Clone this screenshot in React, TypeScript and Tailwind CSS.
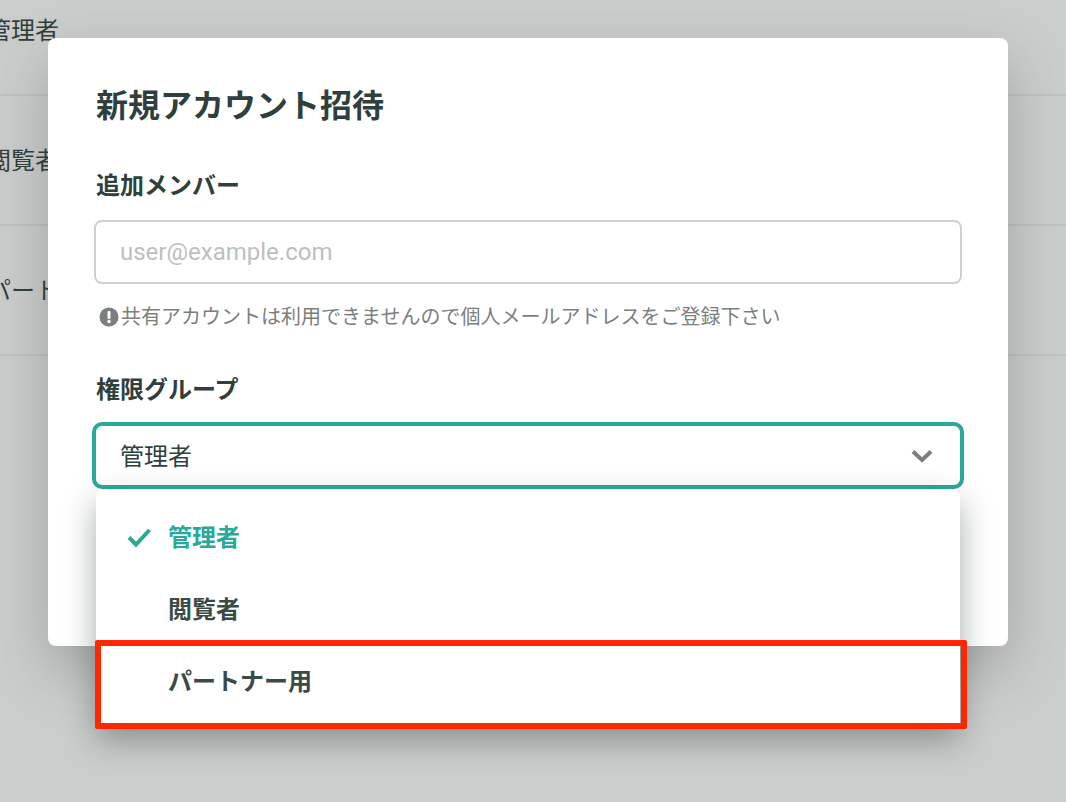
const font = "font-['Roboto','Noto_Sans_CJK_JP',sans-serif]"

function BgRow({ label }: { label: string }) {
  return (
    <div className="h-[130px] flex items-center pt-[1px] border-b-2 border-[#bfc2c1]">
      <span className="-ml-[13px] text-[24px] text-[#2f3f3c]">{label}</span>
    </div>
  )
}

function Option({ label, active }: { label: string; active?: boolean }) {
  return (
    <div className="h-[72px] flex items-center pt-[2px]">
      <div className="w-[72px] flex justify-end pr-[16px]">
        {active && (
          <svg width="26" height="22" viewBox="0 0 26 22" fill="none" className="-mt-[3px]">
            <path d="M3 11.5 L10 18.5 L23.5 4" stroke="#2aa99b" strokeWidth="4" />
          </svg>
        )}
      </div>
      <span className={active ? "text-[24px] font-bold text-[#2aa99b]" : "text-[24px] font-bold text-[#3a4a47]"}>{label}</span>
    </div>
  )
}

export default function App() {
  return (
    <div className={`${font} relative w-[1066px] h-[802px] overflow-hidden bg-[#cbcdcc]`}>
      <div className="-mt-[34px]">
        <BgRow label="管理者" />
        <BgRow label="閲覧者" />
        <BgRow label="パートナー用" />
      </div>

      <div className="absolute left-[48px] top-[38px] w-[960px] h-[608px] bg-white rounded-[8px] pt-[44px] px-[48px] shadow-[0_24px_56px_rgba(50,60,60,0.28)]">
        <h1 className="text-[32px] leading-[48px] font-bold text-[#2f3f3c]">新規アカウント招待</h1>

        <p className="mt-[38px] text-[24px] leading-[36px] font-bold text-[#2f3f3c]">追加メンバー</p>
        <div className="mt-[16px] -mx-[2px] h-[64px] border-2 border-[#cfd1d0] rounded-[8px] flex items-center pl-[24px] text-[24px] text-[#bcbfbe]">
          user@example.com
        </div>
        <div className="mt-[18px] flex items-center h-[30px] pl-[4px] text-[20px] text-[#7b7f7e]">
          <svg width="20" height="20" viewBox="0 0 20 20" className="mr-[1px] -ml-[1px]">
            <circle cx="10" cy="10" r="9.5" fill="#7b7f7e" />
            <rect x="8.5" y="4" width="3" height="8" rx="1" fill="#fff" />
            <circle cx="10" cy="14.5" r="1.7" fill="#fff" />
          </svg>
          <span className="ml-[1px]">共有アカウントは利用できませんので個人メールアドレスをご登録下さい</span>
        </div>

        <p className="mt-[40px] text-[24px] leading-[36px] font-bold text-[#2f3f3c]">権限グループ</p>
        <div className="relative mt-[14px] -mx-[4px] h-[67px] border-4 border-[#2aa99b] rounded-[10px] flex items-center justify-between pl-[24px] pr-[27px] text-[24px] text-[#2f3f3c]">
          <span className="pt-[3px]">管理者</span>
          <svg width="22" height="14" viewBox="0 0 22 14" fill="none">
            <path d="M2 2.5 L11 11 L20 2.5" stroke="#7b7f7e" strokeWidth="4" />
          </svg>
        </div>
      </div>

      <div className="absolute left-[96px] top-[490px] w-[864px] h-[238px] pt-[11px] bg-white rounded-[6px] shadow-[0_12px_32px_rgba(40,50,50,0.4)]">
        <Option label="管理者" active />
        <Option label="閲覧者" />
        <Option label="パートナー用" />
      </div>

      <div className="absolute left-[95px] top-[640px] w-[872px] h-[89px] border-[6px] border-[#ff2600] rounded-[2px]" />
    </div>
  )
}
